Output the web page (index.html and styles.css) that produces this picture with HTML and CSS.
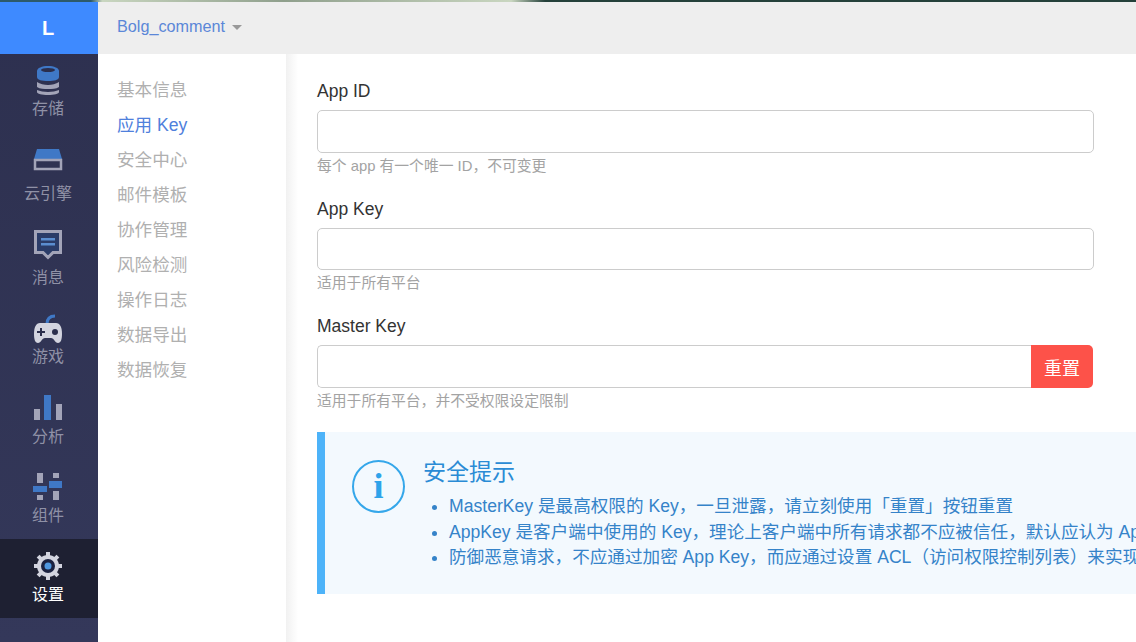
FILE: index.html
```html
<!DOCTYPE html>
<html lang="zh-CN">
<head>
    <meta charset="UTF-8">
    <title>Bolg_comment - 应用 Key</title>
    <link rel="stylesheet" href="styles.css">
</head>
<body>
    <div class="top-strip"></div>
    <div class="app">
        <aside class="sidebar">
            <div class="logo">L</div>
            <nav class="nav">
                <a class="nav-item h78">
                    <svg class="nav-icon" viewBox="0 0 40 40">
                        <path class="gray" d="M9 24c3 2 7 3 11 3s8-1 11-3v5c0 0 0 0 0 0-3 2-7 2-11 2s-8 0-11-2z"/>
                        <path class="gray" d="M9 32c3 1 7 2 11 2s8-1 11-2v2c0 2-5 3-11 3s-11-1-11-3z"/>
                        <path class="blue" d="M9 13c0-3 5-5 11-5s11 2 11 5v6c0 3-5 4-11 4s-11-1-11-4z"/>
                        <ellipse class="dark" cx="20" cy="12" rx="7" ry="2"/>
                    </svg>
                    <span>存储</span>
                </a>
                <a class="nav-item h85">
                    <svg class="nav-icon" viewBox="0 0 40 40">
                        <path class="blue" d="M9 6h22l3 10H6z"/>
                        <rect x="7" y="17" width="26" height="9" fill="none" stroke="#a3a4b8" stroke-width="2.5"/>
                    </svg>
                    <span>云引擎</span>
                </a>
                <a class="nav-item h84">
                    <svg class="nav-icon" viewBox="0 0 40 40">
                        <path d="M7.500 4.500h25v21H25l-5 5-5-5H7.500z" fill="#2b3c68" stroke="#a3a4b8" stroke-width="3"/>
                        <rect x="13" y="11" width="14" height="2.500" fill="#5b8ed0"/>
                        <rect x="13" y="16" width="14" height="2.500" fill="#5b8ed0"/>
                    </svg>
                    <span>消息</span>
                </a>
                <a class="nav-item h79">
                    <svg class="nav-icon" viewBox="0 0 40 40">
                        <path d="M19 18c0-6 3-8 8-8" fill="none" stroke="#3f78c6" stroke-width="3"/>
                        <path class="light" d="M12 17h16c4 0 6 4 6 11 0 5-1 9-4 9-3 0-4-5-7-5h-6c-3 0-4 5-7 5-3 0-4-4-4-9 0-7 2-11 6-11z"/>
                        <path class="dark" d="M12 22h2v3h3v2h-3v3h-2v-3H9v-2h3z"/>
                        <circle class="dark" cx="27" cy="26" r="3"/>
                    </svg>
                    <span>游戏</span>
                </a>
                <a class="nav-item h80">
                    <svg class="nav-icon" viewBox="0 0 40 40">
                        <rect class="gray" x="6" y="23" width="6" height="11"/>
                        <rect class="blue" x="16" y="9" width="7" height="25"/>
                        <rect class="gray" x="28" y="18" width="6" height="16"/>
                    </svg>
                    <span>分析</span>
                </a>
                <a class="nav-item h79">
                    <svg class="nav-icon" viewBox="0 0 40 40">
                        <rect class="gray" x="9" y="8" width="6" height="10"/>
                        <rect class="blue" x="5" y="21" width="14" height="6"/>
                        <rect class="gray" x="9" y="30" width="6" height="5"/>
                        <rect class="gray" x="25" y="8" width="6" height="5"/>
                        <rect class="blue" x="21" y="16" width="13" height="7"/>
                        <rect class="gray" x="25" y="26" width="6" height="9"/>
                    </svg>
                    <span>组件</span>
                </a>
                <a class="nav-item h79 active">
                    <svg class="nav-icon" viewBox="0 0 40 40">
                        <g class="light">
                            <rect x="18" y="8" width="4" height="28"/>
                            <rect x="18" y="8" width="4" height="28" transform="rotate(45 20 22)"/>
                            <rect x="18" y="8" width="4" height="28" transform="rotate(90 20 22)"/>
                            <rect x="18" y="8" width="4" height="28" transform="rotate(135 20 22)"/>
                        </g>
                        <circle class="light" cx="20" cy="22" r="11"/>
                        <circle cx="20" cy="22" r="7" fill="#1b2140"/>
                        <circle cx="20" cy="22" r="3.500" fill="#4f97e0"/>
                    </svg>
                    <span>设置</span>
                </a>
            </nav>
        </aside>

        <div class="right">
            <header class="topbar">
                <span class="app-name">Bolg_comment</span>
                <span class="caret"></span>
            </header>
            <div class="content">
                <ul class="subnav">
                    <li>基本信息</li>
                    <li class="current">应用 Key</li>
                    <li>安全中心</li>
                    <li>邮件模板</li>
                    <li>协作管理</li>
                    <li>风险检测</li>
                    <li>操作日志</li>
                    <li>数据导出</li>
                    <li>数据恢复</li>
                </ul>
                <div class="gutter"></div>
                <main class="main">
                    <div class="field">
                        <label class="field-label">App ID</label>
                        <div class="input tall"></div>
                        <p class="help">每个 app 有一个唯一 ID，不可变更</p>
                    </div>
                    <div class="field">
                        <label class="field-label">App Key</label>
                        <div class="input"></div>
                        <p class="help">适用于所有平台</p>
                    </div>
                    <div class="field">
                        <label class="field-label">Master Key</label>
                        <div class="input-group">
                            <div class="input tall joined"></div>
                            <button class="btn-reset" type="button">重置</button>
                        </div>
                        <p class="help">适用于所有平台，并不受权限设定限制</p>
                    </div>

                    <div class="alert">
                        <div class="alert-icon">i</div>
                        <div class="alert-body">
                            <h4>安全提示</h4>
                            <ul>
                                <li>MasterKey 是最高权限的 Key，一旦泄露，请立刻使用「重置」按钮重置</li>
                                <li>AppKey 是客户端中使用的 Key，理论上客户端中所有请求都不应被信任，默认应认为 AppKey 是公开的</li>
                                <li>防御恶意请求，不应通过加密 App Key，而应通过设置 ACL（访问权限控制列表）来实现</li>
                            </ul>
                        </div>
                    </div>
                </main>
            </div>
        </div>
    </div>
</body>
</html>
```

FILE: styles.css
```css
html, body {
    margin: 0;
    padding: 0;
    height: 642px;
    overflow: hidden;
    background-color: #fff;
    font-family: "Liberation Sans", "Noto Sans CJK SC", sans-serif;
}

.top-strip {
    height: 2px;
    background: linear-gradient(90deg, #2d5a6a 0, #2d5a6a 8%, #c9d6c0 9%, #8f9f8c 25%, #c9d6c0 45%, #24403a 48%, #24403a 100%);
}

.app {
    display: flex;
    height: 640px;
}

.sidebar {
    width: 98px;
    flex-shrink: 0;
    background: linear-gradient(180deg, #2d304f 0, #34385a 100%);
}

.logo {
    height: 52px;
    line-height: 52px;
    padding-right: 2px;
    text-align: center;
    background-color: #3e8aff;
    color: #fff;
    font-size: 20px;
    font-weight: bold;
}

.nav-item {
    display: flex;
    flex-direction: column;
    align-items: center;
    justify-content: flex-end;
    box-sizing: border-box;
    width: 98px;
    padding: 0 2px 13px 0;
    color: #8f91a6;
    font-size: 16px;
    line-height: 20px;
}

.h78 { height: 78px; }
.h79 { height: 79px; }
.h80 { height: 80px; }
.h84 { height: 84px; }
.h85 { height: 85px; }

.nav-item.active {
    background-color: #1e2032;
    color: #fff;
}

.nav-icon {
    display: block;
    width: 40px;
    height: 40px;
    margin-bottom: 1px;
    flex-shrink: 0;
}

.gray { fill: #a3a4b8; }
.blue { fill: #3f78c6; }
.dark { fill: #2b2e4c; }
.light { fill: #d3d4df; }

.right {
    flex: 1;
    min-width: 0;
    display: flex;
    flex-direction: column;
}

.topbar {
    height: 52px;
    flex-shrink: 0;
    display: flex;
    align-items: center;
    padding-left: 19px;
    padding-bottom: 4px;
    box-sizing: border-box;
    background-color: #eeeeee;
}

.app-name {
    color: #5b87d8;
    font-size: 16.2px;
}

.caret {
    width: 0;
    height: 0;
    margin-left: 7px;
    margin-top: 2px;
    border-left: 5px solid transparent;
    border-right: 5px solid transparent;
    border-top: 5px solid #999;
}

.content {
    flex: 1;
    display: flex;
    min-height: 0;
}

.subnav {
    width: 188px;
    flex-shrink: 0;
    box-sizing: border-box;
    margin: 0;
    padding: 19px 0 0 19px;
    list-style: none;
    font-size: 17.6px;
    line-height: 35px;
    color: #b0b0b0;
}

.subnav .current {
    color: #4f80dc;
}

.gutter {
    width: 12px;
    flex-shrink: 0;
    background: linear-gradient(90deg, #f1f1f1, #fff);
}

.main {
    flex: 1;
    min-width: 0;
    padding: 25px 0 0 19px;
}

.field {
    width: 777px;
    margin-bottom: 18px;
}

.field-label {
    display: block;
    height: 24px;
    margin-bottom: 7px;
    color: #333;
    font-size: 17.5px;
    line-height: 24px;
}

.input {
    box-sizing: border-box;
    height: 42px;
    background-color: #fff;
    border: 1px solid #ccc;
    border-radius: 5px;
}

.input.tall {
    height: 43px;
}

.input.joined {
    flex: 1;
    border-right: 0;
    border-radius: 5px 0 0 5px;
}

.input-group {
    display: flex;
    margin-right: 1px;
}

.btn-reset {
    width: 62px;
    height: 43px;
    padding: 0;
    border: none;
    border-radius: 0 5px 5px 0;
    background-color: #fd5249;
    color: #fff;
    font-family: inherit;
    font-size: 18px;
}

.help {
    margin: 0;
    height: 26px;
    color: #a3a3a3;
    font-size: 14.8px;
    line-height: 26px;
}

.alert {
    display: flex;
    width: 1000px;
    height: 162px;
    box-sizing: border-box;
    padding: 25px 0 0 27px;
    border-left: 8px solid #4db3f9;
    background-color: #f3f9fe;
}

.alert-icon {
    box-sizing: border-box;
    width: 53px;
    height: 53px;
    margin-top: 3px;
    flex-shrink: 0;
    border: 2px solid #35a7ea;
    border-radius: 50%;
    text-align: center;
    color: #2ea3ea;
    font-family: "Liberation Serif", serif;
    font-size: 36px;
    font-weight: bold;
    line-height: 48px;
}

.alert-body {
    margin-left: 18px;
    white-space: nowrap;
}

.alert-body h4 {
    margin: 0 0 7px 0;
    color: #2a8bd5;
    font-size: 23px;
    font-weight: normal;
    line-height: 30px;
}

.alert-body ul {
    margin: 0;
    padding-left: 26px;
    color: #3583c9;
    font-size: 17.6px;
    line-height: 25.5px;
}
```
